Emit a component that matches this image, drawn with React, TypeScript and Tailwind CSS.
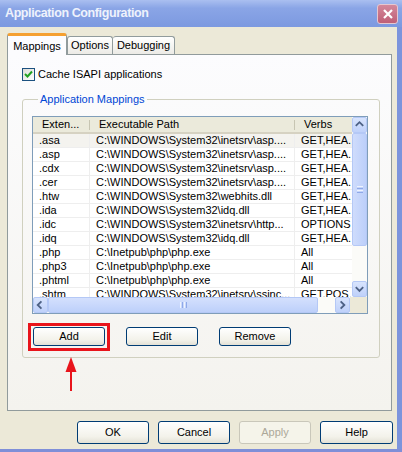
import React from "react";

const rows: [string, string, string][] = [
  [".asa", "C:\\WINDOWS\\System32\\inetsrv\\asp....", "GET,HEA."],
  [".asp", "C:\\WINDOWS\\System32\\inetsrv\\asp....", "GET,HEA."],
  [".cdx", "C:\\WINDOWS\\System32\\inetsrv\\asp....", "GET,HEA."],
  [".cer", "C:\\WINDOWS\\System32\\inetsrv\\asp....", "GET,HEA."],
  [".htw", "C:\\WINDOWS\\System32\\webhits.dll", "GET,HEA."],
  [".ida", "C:\\WINDOWS\\System32\\idq.dll", "GET,HEA."],
  [".idc", "C:\\WINDOWS\\System32\\inetsrv\\http...", "OPTIONS"],
  [".idq", "C:\\WINDOWS\\System32\\idq.dll", "GET,HEA."],
  [".php", "C:\\Inetpub\\php\\php.exe", "All"],
  [".php3", "C:\\Inetpub\\php\\php.exe", "All"],
  [".phtml", "C:\\Inetpub\\php\\php.exe", "All"],
  [".shtm", "C:\\WINDOWS\\System32\\inetsrv\\ssinc...", "GET,POS."],
];

function XpButton({
  label,
  disabled,
  className = "",
}: {
  label: string;
  disabled?: boolean;
  className?: string;
}) {
  return (
    <button
      className={`flex items-center justify-center rounded-[3px] border text-[11px] ${
        disabled
          ? "border-[#c9c7ba] bg-[#f5f4ea] text-[#aca899]"
          : "border-[#003c74] bg-[linear-gradient(to_bottom,#ffffff,#f3f2ea_70%,#e3e1d6)] text-black"
      } ${className}`}
    >
      {label}
    </button>
  );
}

function Chevron({ dir }: { dir: "up" | "down" | "left" | "right" }) {
  const pts = {
    up: "3,8 7,4 11,8",
    down: "3,5 7,9 11,5",
    left: "8,3 4,7 8,11",
    right: "5,3 9,7 5,11",
  }[dir];
  return (
    <svg width="14" height="14" viewBox="0 0 14 14">
      <polyline points={pts} fill="none" stroke="#4d6185" strokeWidth="2" />
    </svg>
  );
}

function ScrollBtn({ dir, className = "" }: { dir: "up" | "down" | "left" | "right"; className?: string }) {
  return (
    <div
      className={`flex items-center justify-center rounded-[2px] border border-[#b4c8f6] bg-[linear-gradient(to_bottom,#d8e4fd,#bfd1fa)] ${className}`}
    >
      <Chevron dir={dir} />
    </div>
  );
}

function ListView() {
  return (
    <div className="flex h-[198px] w-[336px] flex-col border border-[#7f9db9] bg-white">
      <div className="flex h-[180px]">
        <div className="flex w-[319px] flex-col overflow-hidden">
          <div className="flex h-[17px] shrink-0 border-b-2 border-[#d6d2c2] bg-[#ebeadb] text-[11px] leading-[15px]">
            <div className="relative w-[57px] shrink-0 pl-[9px]">
              Exten...
              <span className="absolute right-0 top-[3px] h-[10px] border-r border-[#c7c5b2]" />
            </div>
            <div className="relative w-[205px] shrink-0 pl-[9px]">
              Executable Path
              <span className="absolute right-0 top-[3px] h-[10px] border-r border-[#c7c5b2]" />
            </div>
            <div className="shrink-0 whitespace-nowrap pl-[9px]">Verbs</div>
          </div>
          {rows.map((r, i) => (
            <div
              key={r[0]}
              className={`flex h-[14px] shrink-0 border-b border-[#eeeeee] text-[11px] leading-[13px] ${
                i === 0 ? "bg-[#f4f3ef]" : ""
              }`}
            >
              <div className="w-[57px] shrink-0 border-r border-[#eeeeee] pl-[6px]">{r[0]}</div>
              <div className="w-[205px] shrink-0 overflow-hidden whitespace-nowrap border-r border-[#eeeeee] pl-[6px]">
                {r[1]}
              </div>
              <div className="shrink-0 whitespace-nowrap pl-[6px]">{r[2]}</div>
            </div>
          ))}
        </div>
        <div className="flex w-[15px] flex-col bg-[#fbfbf8]">
          <ScrollBtn dir="up" className="h-[16px] w-[15px]" />
          <div className="flex h-[113px] w-[15px] items-center justify-center rounded-[2px] border border-[#b4c8f6] bg-[linear-gradient(to_right,#cfdcfc,#bccffa)]">
            <div className="flex flex-col gap-[1px]">
              <span className="h-px w-[6px] bg-[#eef3fe]" />
              <span className="h-px w-[6px] bg-[#8fa9e8]" />
              <span className="h-px w-[6px] bg-[#eef3fe]" />
              <span className="h-px w-[6px] bg-[#8fa9e8]" />
            </div>
          </div>
          <div className="flex-1" />
          <ScrollBtn dir="down" className="h-[16px] w-[15px]" />
        </div>
      </div>
      <div className="flex h-[16px] bg-[#fbfbf8]">
        <ScrollBtn dir="left" className="h-[16px] w-[15px]" />
        <div className="flex w-[270px] items-center justify-center rounded-[2px] border border-[#b4c8f6] bg-[linear-gradient(to_bottom,#d4e0fd,#bdd0fa)]">
          <div className="flex gap-[1px]">
            <span className="h-[6px] w-px bg-[#eef3fe]" />
            <span className="h-[6px] w-px bg-[#8fa9e8]" />
            <span className="h-[6px] w-px bg-[#eef3fe]" />
            <span className="h-[6px] w-px bg-[#8fa9e8]" />
          </div>
        </div>
        <div className="w-[17px]" />
        <ScrollBtn dir="right" className="h-[16px] w-[15px]" />
        <div className="w-[17px] bg-[#ece9d8]" />
      </div>
    </div>
  );
}

export default function App() {
  return (
    <div className="flex h-[452px] w-[402px] flex-col overflow-hidden bg-[#ece9d8] font-['Liberation_Sans',Arial,sans-serif] text-[11px] text-black">
      {/* title bar */}
      <div className="flex h-[27px] shrink-0 items-center justify-between bg-[linear-gradient(to_bottom,#aabff0,#8aa5e6_30%,#7c99e0)] pl-[5px] pr-[4px]">
        <span className="text-[12.5px] font-bold tracking-[-0.4px] text-[#eef2fc]">Application Configuration</span>
        <div className="flex h-[20px] w-[21px] items-center justify-center rounded-[3px] border border-[#e5c7d0] bg-[linear-gradient(to_bottom,#d3889a,#bf5f77)]">
          <svg width="12" height="12" viewBox="0 0 12 12">
            <path d="M2 2 L10 10 M10 2 L2 10" stroke="#fff" strokeWidth="2.2" />
          </svg>
        </div>
      </div>

      <div className="flex flex-1">
        <div className="flex flex-1 flex-col pl-[7px] pt-[6px]">
          {/* tabs */}
          <div className="relative z-10 flex h-[21px] items-end">
            <div className="-mb-px flex h-[22px] w-[60px] items-start justify-center rounded-t-[3px] border-x border-t-[3px] border-x-[#919b9c] border-t-[#f5a030] bg-[#fcfcfe] pt-[2px]">
              Mappings
            </div>
            <div className="flex h-[18px] w-[46px] items-center justify-center rounded-t-[3px] border-x border-t border-[#919b9c] bg-[linear-gradient(to_bottom,#ffffff,#ecebe6)]">
              Options
            </div>
            <div className="flex h-[18px] w-[62px] items-center justify-center rounded-t-[3px] border-r border-t border-[#919b9c] bg-[linear-gradient(to_bottom,#ffffff,#ecebe6)]">
              Debugging
            </div>
          </div>

          {/* panel */}
          <div className="flex h-[357px] w-[385px] flex-col border border-[#919b9c] bg-[linear-gradient(to_bottom,#fcfcfe,#f4f3ee)] pl-[14px] pr-[11px] pt-[13px]">
            <label className="flex items-center gap-[3px]">
              <span className="flex h-[13px] w-[13px] items-center justify-center border border-[#1c5180] bg-[linear-gradient(135deg,#dcdcd7,#ffffff)]">
                <svg width="9" height="9" viewBox="0 0 9 9">
                  <path d="M1 4 L3.5 6.5 L8 1.5" fill="none" stroke="#21a121" strokeWidth="2" />
                </svg>
              </span>
              <span className="leading-[13px]">Cache ISAPI applications</span>
            </label>

            <fieldset className="mt-[12px] h-[265px] rounded-[3px] border border-[#d0d0bf] pl-[9px] pr-[10px]">
              <legend className="ml-[6px] px-[2px] leading-[13px] text-[#0046d5]">Application Mappings</legend>
              <div className="mt-[10px]">
                <ListView />
              </div>
              <div className="mt-[13px] flex gap-[21px] pl-px">
                <div className="relative">
                  <XpButton label="Add" className="h-[19px] w-[72px]" />
                  <div className="absolute -bottom-[5px] -left-[5px] -right-[5px] -top-[4px] border-[3px] border-[#e8141b]" />
                  <svg className="absolute left-[32px] top-[30px]" width="12" height="35" viewBox="0 0 12 35">
                    <polygon points="6,0 11.5,15 0.5,15" fill="#e8141b" />
                    <rect x="5" y="14" width="2" height="20" fill="#e8141b" />
                  </svg>
                </div>
                <XpButton label="Edit" className="h-[19px] w-[72px]" />
                <XpButton label="Remove" className="h-[19px] w-[72px]" />
              </div>
            </fieldset>
          </div>

          {/* dialog buttons */}
          <div className="mt-[10px] flex justify-end gap-[9px] pr-[4px]">
            <XpButton label="OK" className="h-[23px] w-[72px]" />
            <XpButton label="Cancel" className="h-[23px] w-[72px]" />
            <XpButton label="Apply" disabled className="h-[23px] w-[72px]" />
            <XpButton label="Help" className="h-[23px] w-[73px]" />
          </div>
        </div>
        <div className="w-[5px] bg-[#7c94dc]" />
      </div>
      <div className="h-[3px] shrink-0 bg-[#7f8fd8]" />
    </div>
  );
}
